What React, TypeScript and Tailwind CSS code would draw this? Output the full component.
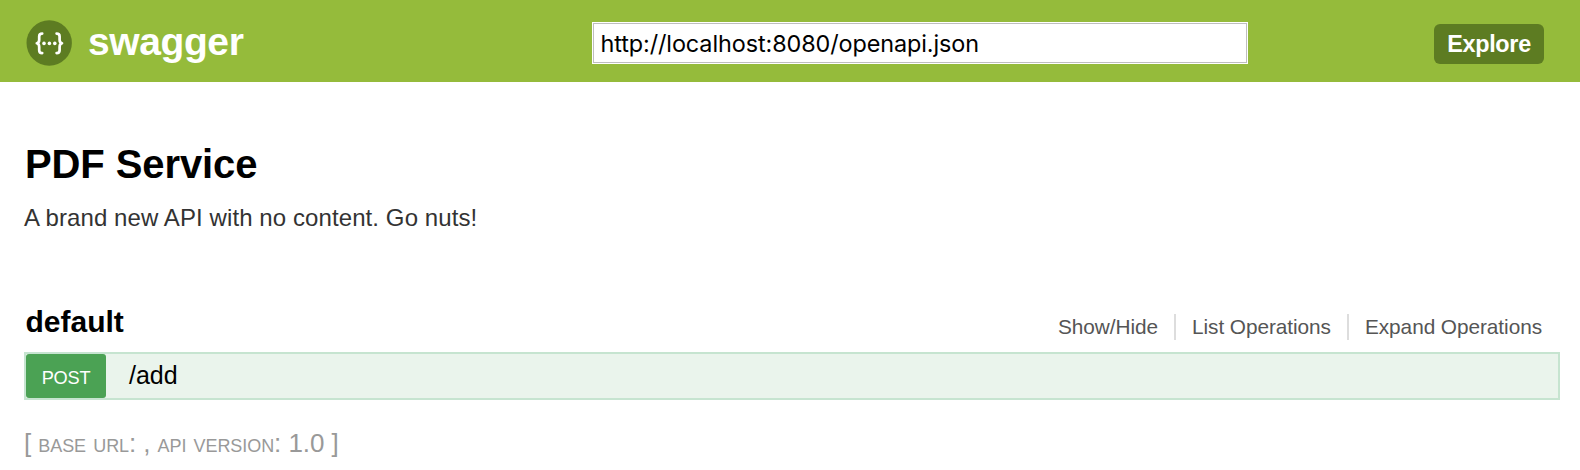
const links = ["Show/Hide", "List Operations", "Expand Operations"];

function Logo() {
  return (
    <svg className="block size-[46px]" viewBox="0 0 46 46" fill="none">
      <circle cx="23.2" cy="23" r="22.7" fill="#5d7c22" />
      <g stroke="#fff" strokeWidth="2.7" strokeLinecap="round" strokeLinejoin="round">
        <path d="M16.2 13.6C13.9 13.6 13.2 14.6 13.2 16.4V19.7C13.2 22 12.3 23 10.8 23.3C12.3 23.6 13.2 24.6 13.2 27V30.2C13.2 32 13.9 33.1 16.2 33.1" />
        <path d="M30.6 13.6C32.9 13.6 33.6 14.6 33.6 16.4V19.7C33.6 22 34.5 23 36 23.3C34.5 23.6 33.6 24.6 33.6 27V30.2C33.6 32 32.9 33.1 30.6 33.1" />
      </g>
      <g fill="#fff">
        <circle cx="18" cy="23.4" r="1.8" />
        <circle cx="23.4" cy="23.4" r="1.8" />
        <circle cx="28.8" cy="23.4" r="1.8" />
      </g>
    </svg>
  );
}

export default function App() {
  return (
    <div className="h-[470px] w-[1580px] overflow-hidden bg-white font-['Liberation_Sans',sans-serif] text-black">
      <header className="flex h-[82px] items-start bg-[#95bb3b] pl-[26px] pr-9">
        <div className="flex w-[566px] items-start pt-5">
          <Logo />
          <span className="pl-4 pt-[1px] text-[39px] font-bold leading-[42px] tracking-[-0.4px] text-white">swagger</span>
        </div>
        <div className="mt-[22px] h-[42px] w-[656px] bg-white p-px">
          <input
            className="block h-10 w-full border border-[#bebebe] bg-white px-[6.5px] font-['Inter',sans-serif] text-[23.4px] tracking-[-0.09px] text-black outline-none"
            defaultValue="http://localhost:8080/openapi.json"
          />
        </div>
        <button className="ml-auto mt-6 h-10 w-[110px] rounded-md bg-[#5d7c22] text-[23.4px] font-bold leading-10 tracking-[-0.3px] text-white">
          Explore
        </button>
      </header>
      <main className="pl-6 pr-5">
        <h1 className="mt-[58px] pl-px text-[40px] font-bold leading-[48px] tracking-[-0.1px]">PDF Service</h1>
        <p className="mt-[15px] text-[24px] leading-[30px] tracking-[0.09px] text-[#333]">A brand new API with no content. Go nuts!</p>
        <div className="mt-[69px] flex h-[50px] items-start">
          <h2 className="pl-[1.5px] pt-[2px] text-[30px] font-bold leading-[36px]">default</h2>
          <ul className="ml-auto mt-[12px] flex pr-[2px]">
            {links.map((label) => (
              <li
                key={label}
                className="h-[26px] border-r-2 border-[#ddd] px-4 text-[20.8px] leading-[26px] tracking-[-0.06px] text-[#555] last:border-r-0"
              >
                {label}
              </li>
            ))}
          </ul>
        </div>
        <div className="flex h-12 border-2 border-[#c6e4d0] bg-[#eaf4ec]">
          <span className="w-20 rounded-[3px] bg-[#4ba254] pt-[2px] text-center text-[18.2px] leading-[44px] tracking-[-0.2px] text-white">POST</span>
          <span className="pl-[23px] text-[25px] leading-[42px]">/add</span>
        </div>
        <footer className="mt-[28px] whitespace-pre text-[26px] leading-[30px] tracking-[-0.07px] text-[#999] [font-variant:small-caps]">
          [ base url: , api version: 1.0 ]
        </footer>
      </main>
    </div>
  );
}
